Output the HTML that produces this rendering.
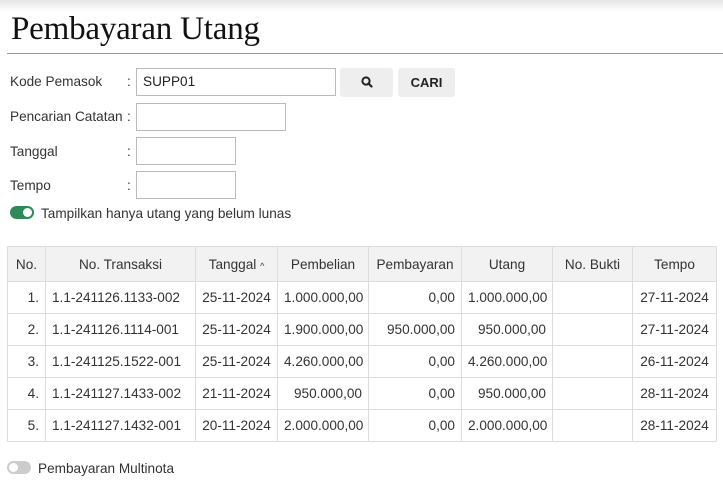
<!DOCTYPE html>
<html><head><style>
*{box-sizing:border-box;margin:0;padding:0}
body{width:723px;height:489px;background:#fff;font-family:"Liberation Sans",sans-serif;font-size:13.6px;color:#222;position:relative;overflow:hidden}
.shadow{position:absolute;left:0;top:0;width:723px;height:12px;background:linear-gradient(#e6e6e6,#fff)}
h1{position:absolute;left:11px;top:11px;font-family:"Liberation Serif",serif;font-weight:normal;font-size:33px;color:#111;letter-spacing:-0.2px}
.hr{position:absolute;left:7px;top:53px;width:716px;height:1px;background:#999}
.lbl{position:absolute;left:10px;color:#333}
.col{position:absolute;left:127px;color:#333}
.inp{position:absolute;left:136px;border:1px solid #bbb;height:28px;padding:5px 6px}
.btn{position:absolute;top:68px;height:29px;background:#eee;border-radius:3px;font-weight:bold;font-size:13px;text-align:center;line-height:29px;color:#222}
table{position:absolute;left:7px;top:246px;border-collapse:collapse;font-size:13.6px;table-layout:fixed;width:709px}
td,th{border:1px solid #ddd;height:32px;padding:0 6px;white-space:nowrap;color:#333;overflow:hidden}
th{font-weight:normal;background:#f2f2f2;height:35px;text-align:center}
td{text-align:right}
td.c{text-align:center;padding:0 2px}td.l{text-align:left}
.tg{position:absolute;border-radius:7px}
</style></head><body>
<div class="shadow"></div>
<h1>Pembayaran Utang</h1>
<div class="hr"></div>
<div class="lbl" style="top:74px">Kode Pemasok</div><div class="col" style="top:74px">:</div>
<div class="inp" style="top:68px;width:200px">SUPP01</div>
<div class="btn" style="left:340px;width:53px"><svg width="12" height="12" viewBox="0 0 12 12" style="vertical-align:-1px"><circle cx="5" cy="5" r="3.6" fill="none" stroke="#222" stroke-width="2"/><path d="M7.5 7.5L10.5 10.5" stroke="#222" stroke-width="2.2" stroke-linecap="round"/></svg></div>
<div class="btn" style="left:398px;width:57px">CARI</div>
<div class="lbl" style="top:109px">Pencarian Catatan</div><div class="col" style="top:109px">:</div>
<div class="inp" style="top:103px;width:150px"></div>
<div class="lbl" style="top:144px">Tanggal</div><div class="col" style="top:144px">:</div>
<div class="inp" style="top:137px;width:100px"></div>
<div class="lbl" style="top:178px">Tempo</div><div class="col" style="top:178px">:</div>
<div class="inp" style="top:171px;width:100px"></div>
<div class="tg" style="left:10px;top:206px;width:24px;height:13px;background:#2e8b57"><div style="position:absolute;right:2px;top:2px;width:9px;height:9px;border-radius:50%;background:#fff"></div></div>
<div class="lbl" style="left:41px;top:206px">Tampilkan hanya utang yang belum lunas</div>
<table>
<colgroup><col style="width:38px"><col style="width:150px"><col style="width:82px"><col style="width:91px"><col style="width:93px"><col style="width:91px"><col style="width:80px"><col style="width:84px"></colgroup>
<tr><th>No.</th><th>No. Transaksi</th><th>Tanggal <span style="font-size:9px">^</span></th><th>Pembelian</th><th>Pembayaran</th><th>Utang</th><th>No. Bukti</th><th>Tempo</th></tr>
<tr><td>1.</td><td class="l">1.1-241126.1133-002</td><td class="c">25-11-2024</td><td>1.000.000,00</td><td>0,00</td><td>1.000.000,00</td><td></td><td class="c">27-11-2024</td></tr>
<tr><td>2.</td><td class="l">1.1-241126.1114-001</td><td class="c">25-11-2024</td><td>1.900.000,00</td><td>950.000,00</td><td>950.000,00</td><td></td><td class="c">27-11-2024</td></tr>
<tr><td>3.</td><td class="l">1.1-241125.1522-001</td><td class="c">25-11-2024</td><td>4.260.000,00</td><td>0,00</td><td>4.260.000,00</td><td></td><td class="c">26-11-2024</td></tr>
<tr><td>4.</td><td class="l">1.1-241127.1433-002</td><td class="c">21-11-2024</td><td>950.000,00</td><td>0,00</td><td>950.000,00</td><td></td><td class="c">28-11-2024</td></tr>
<tr><td>5.</td><td class="l">1.1-241127.1432-001</td><td class="c">20-11-2024</td><td>2.000.000,00</td><td>0,00</td><td>2.000.000,00</td><td></td><td class="c">28-11-2024</td></tr>
</table>
<div class="tg" style="left:7px;top:461px;width:24px;height:13px;background:#ccc"><div style="position:absolute;left:2px;top:2px;width:9px;height:9px;border-radius:50%;background:#fff"></div></div>
<div class="lbl" style="left:38px;top:461px">Pembayaran Multinota</div>
</body></html>
